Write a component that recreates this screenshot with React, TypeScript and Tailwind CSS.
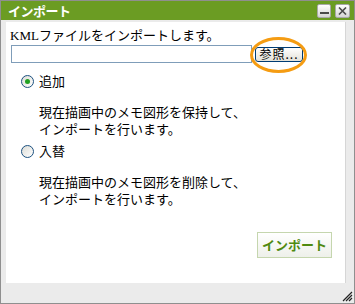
import React from "react";

const jp = { fontFamily: '"Noto Sans CJK JP", "Noto Sans", sans-serif' };

function Radio({ checked }: { checked?: boolean }) {
  return (
    <span className="w-[13px] h-[13px] rounded-full border border-[#1c5180] bg-gradient-to-br from-[#dcdcd6] to-white flex items-center justify-center shrink-0">
      {checked && <span className="w-[5px] h-[5px] rounded-full bg-[#21a121]" />}
    </span>
  );
}

export default function App() {
  return (
    <div
      className="w-[355px] h-[304px] bg-[#ebebeb] border border-[#8f8f8f] flex flex-col relative text-black"
      style={jp}
    >
      <div className="h-[19px] bg-[#6b9c23] flex items-start justify-between pl-[7px] pr-[4px]">
        <span className="text-white font-bold text-[13px] leading-[19px] tracking-[-0.5px]">インポート</span>
        <div className="flex gap-[4px] mt-[3px]">
          <div className="w-[14px] h-[14px] rounded-[2px] bg-gradient-to-b from-white to-[#d6d6d6] border border-[#a9a9a9] flex items-end justify-center pb-[3px]">
            <span className="w-[9px] h-[2px] bg-[#4a4a4a]" />
          </div>
          <div className="w-[15px] h-[14px] rounded-[2px] bg-gradient-to-b from-white to-[#d6d6d6] border border-[#a9a9a9] flex items-center justify-center">
            <svg width="9" height="8" viewBox="0 0 9 8">
              <path d="M1 0.5L8 7.5M8 0.5L1 7.5" stroke="#4a4a4a" strokeWidth="1.6" />
            </svg>
          </div>
        </div>
      </div>
      <div className="flex-1 flex flex-col pt-[2px] pl-[5px] pr-[8px] pb-[20px]">
        <div className="flex-1 bg-white border-r border-[#d6d6d6] flex flex-col pl-[4px] pt-[5px]">
          <div className="text-[13px] leading-[16px]">
            <span style={{ fontFamily: '"Liberation Serif", serif' }}>KML</span>ファイルをインポートします。
          </div>
          <div className="flex items-center mt-[1px] ml-[1px]">
            <div className="w-[241px] h-[18px] border border-[#7f9db9] bg-white" />
            <div className="relative ml-[3px]">
              <div className="w-[48px] h-[15px] rounded-[3px] border border-[#003c74] bg-gradient-to-b from-white to-[#e3e1d8] flex items-center justify-center text-[12px] leading-none tracking-[1px]">
                参照...
              </div>
              <div className="absolute left-[-5px] top-[-10px] w-[57px] h-[36px] rounded-[50%] border-[3px] border-[#f59c12]" />
            </div>
          </div>
          <div className="flex items-center h-[16px] mt-[10px] pl-[11px] gap-[5px]">
            <Radio checked />
            <span className="text-[13px] leading-[16px]">追加</span>
          </div>
          <div className="mt-[14px] pl-[29px] text-[13px] leading-[17px]">
            <div>現在描画中のメモ図形を保持して、</div>
            <div>インポートを行います。</div>
          </div>
          <div className="flex items-center h-[16px] mt-[6px] pl-[11px] gap-[5px]">
            <Radio />
            <span className="text-[13px] leading-[16px]">入替</span>
          </div>
          <div className="mt-[14px] pl-[29px] text-[13px] leading-[17px]">
            <div>現在描画中のメモ図形を削除して、</div>
            <div>インポートを行います。</div>
          </div>
          <div className="flex justify-end mt-[25px] mr-[13px]">
            <div className="w-[75px] h-[26px] border border-[#c5d6ae] bg-gradient-to-b from-white to-[#eef0ea] flex items-center justify-center text-[#4f8a10] font-bold text-[13px]">
              インポート
            </div>
          </div>
        </div>
      </div>
      <svg className="absolute right-[1px] bottom-[1px]" width="12" height="12" viewBox="0 0 12 12">
        <path d="M11 2L2 11M11 5L5 11M11 8L8 11" stroke="#222" strokeWidth="1.2" />
      </svg>
    </div>
  );
}
